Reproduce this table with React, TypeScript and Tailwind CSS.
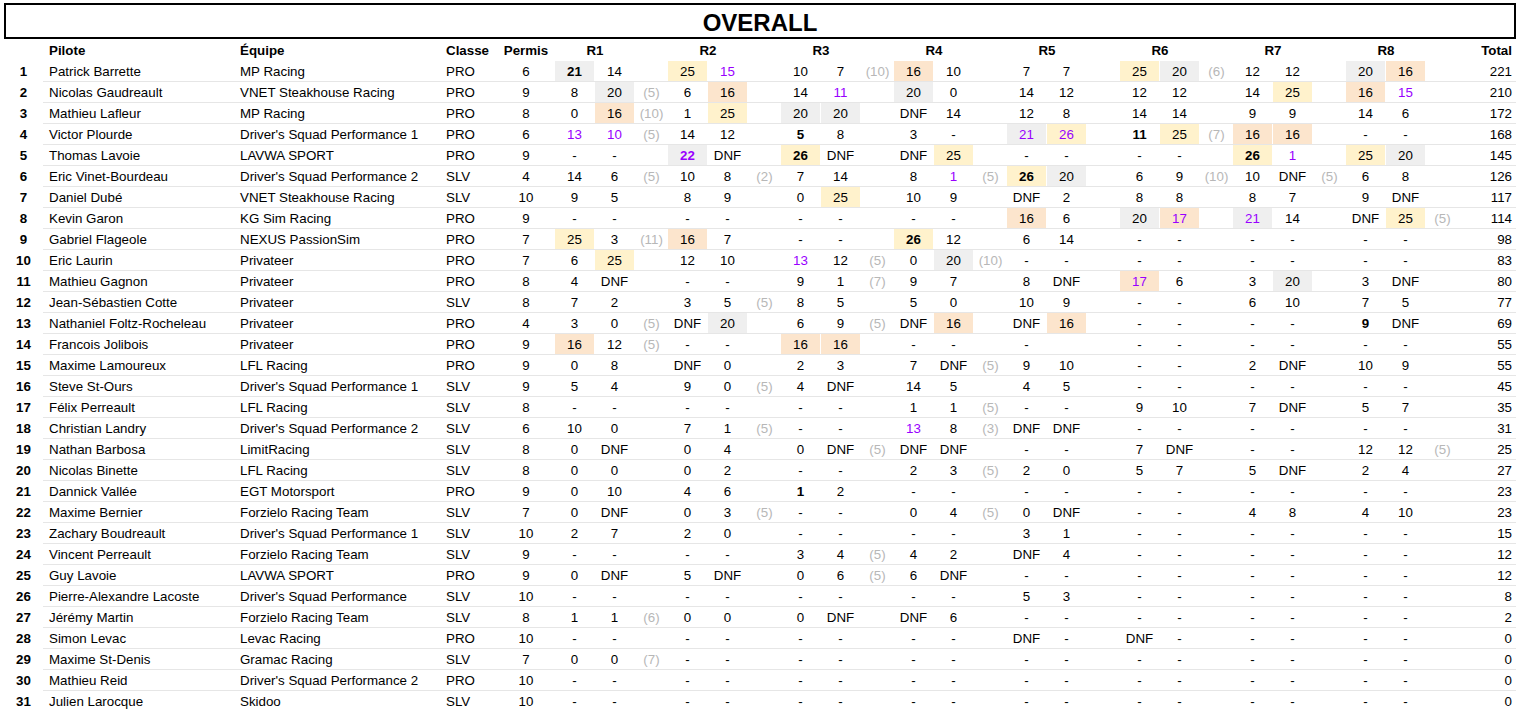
import React from "react";

type Row = [string, string, string, number, string, number];

const ROWS: Row[] = [
  ["Patrick Barrette", "MP Racing", "PRO", 6, "21gb 14 _|25y 15p _|10 7 10|16o 10 _|7 7 _|25y 20g 6|12 12 _|20g 16o _", 221],
  ["Nicolas Gaudreault", "VNET Steakhouse Racing", "PRO", 9, "8 20g 5|6 16o _|14 11p _|20g 0 _|14 12 _|12 12 _|14 25y _|16o 15p _", 210],
  ["Mathieu Lafleur", "MP Racing", "PRO", 8, "0 16o 10|1 25y _|20g 20g _|DNF 14 _|12 8 _|14 14 _|9 9 _|14 6 _", 172],
  ["Victor Plourde", "Driver's Squad Performance 1", "PRO", 6, "13p 10p 5|14 12 _|5b 8 _|3 - _|21gp 26yp _|11b 25y 7|16o 16o _|- - _", 168],
  ["Thomas Lavoie", "LAVWA SPORT", "PRO", 9, "- - _|22gbp DNF _|26yb DNF _|DNF 25y _|- - _|- - _|26yb 1p _|25y 20g _", 145],
  ["Eric Vinet-Bourdeau", "Driver's Squad Performance 2", "SLV", 4, "14 6 5|10 8 2|7 14 _|8 1p 5|26yb 20g _|6 9 10|10 DNF 5|6 8 _", 126],
  ["Daniel Dubé", "VNET Steakhouse Racing", "SLV", 10, "9 5 _|8 9 _|0 25y _|10 9 _|DNF 2 _|8 8 _|8 7 _|9 DNF _", 117],
  ["Kevin Garon", "KG Sim Racing", "PRO", 9, "- - _|- - _|- - _|- - _|16o 6 _|20g 17op _|21gp 14 _|DNF 25y 5", 114],
  ["Gabriel Flageole", "NEXUS PassionSim", "PRO", 7, "25y 3 11|16o 7 _|- - _|26yb 12 _|6 14 _|- - _|- - _|- - _", 98],
  ["Eric Laurin", "Privateer", "PRO", 7, "6 25y _|12 10 _|13p 12 5|0 20g 10|- - _|- - _|- - _|- - _", 83],
  ["Mathieu Gagnon", "Privateer", "PRO", 8, "4 DNF _|- - _|9 1 7|9 7 _|8 DNF _|17op 6 _|3 20g _|3 DNF _", 80],
  ["Jean-Sébastien Cotte", "Privateer", "SLV", 8, "7 2 _|3 5 5|8 5 _|5 0 _|10 9 _|- - _|6 10 _|7 5 _", 77],
  ["Nathaniel Foltz-Rocheleau", "Privateer", "PRO", 4, "3 0 5|DNF 20g _|6 9 5|DNF 16o _|DNF 16o _|- - _|- - _|9b DNF _", 69],
  ["Francois Jolibois", "Privateer", "PRO", 9, "16o 12 5|- - _|16o 16o _|- - _|- _ _|- - _|- - _|- - _", 55],
  ["Maxime Lamoureux", "LFL Racing", "PRO", 9, "0 8 _|DNF 0 _|2 3 _|7 DNF 5|9 10 _|- - _|2 DNF _|10 9 _", 55],
  ["Steve St-Ours", "Driver's Squad Performance 1", "SLV", 9, "5 4 _|9 0 5|4 DNF _|14 5 _|4 5 _|- - _|- - _|- - _", 45],
  ["Félix Perreault", "LFL Racing", "SLV", 8, "- - _|- - _|- - _|1 1 5|- - _|9 10 _|7 DNF _|5 7 _", 35],
  ["Christian Landry", "Driver's Squad Performance 2", "SLV", 6, "10 0 _|7 1 5|- - _|13p 8 3|DNF DNF _|- - _|- - _|- - _", 31],
  ["Nathan Barbosa", "LimitRacing", "SLV", 8, "0 DNF _|0 4 _|0 DNF 5|DNF DNF _|- - _|7 DNF _|- - _|12 12 5", 25],
  ["Nicolas Binette", "LFL Racing", "SLV", 8, "0 0 _|0 2 _|- - _|2 3 5|2 0 _|5 7 _|5 DNF _|2 4 _", 27],
  ["Dannick Vallée", "EGT Motorsport", "PRO", 9, "0 10 _|4 6 _|1b 2 _|- - _|- - _|- - _|- - _|- - _", 23],
  ["Maxime Bernier", "Forzielo Racing Team", "SLV", 7, "0 DNF _|0 3 5|- - _|0 4 5|0 DNF _|- - _|4 8 _|4 10 _", 23],
  ["Zachary Boudreault", "Driver's Squad Performance 1", "SLV", 10, "2 7 _|2 0 _|- - _|- - _|3 1 _|- - _|- - _|- - _", 15],
  ["Vincent Perreault", "Forzielo Racing Team", "SLV", 9, "- - _|- - _|3 4 5|4 2 _|DNF 4 _|- - _|- - _|- - _", 12],
  ["Guy Lavoie", "LAVWA SPORT", "PRO", 9, "0 DNF _|5 DNF _|0 6 5|6 DNF _|- - _|- - _|- - _|- - _", 12],
  ["Pierre-Alexandre Lacoste", "Driver's Squad Performance", "SLV", 10, "- - _|- - _|- - _|- - _|5 3 _|- - _|- - _|- - _", 8],
  ["Jérémy Martin", "Forzielo Racing Team", "SLV", 8, "1 1 6|0 0 _|0 DNF _|DNF 6 _|- - _|- - _|- - _|- - _", 2],
  ["Simon Levac", "Levac Racing", "PRO", 10, "- - _|- - _|- - _|- - _|DNF - _|DNF - _|- - _|- - _", 0],
  ["Maxime St-Denis", "Gramac Racing", "SLV", 7, "0 0 7|- - _|- - _|- - _|- - _|- - _|- - _|- - _", 0],
  ["Mathieu Reid", "Driver's Squad Performance 2", "PRO", 10, "- - _|- - _|- - _|- - _|- - _|- - _|- - _|- - _", 0],
  ["Julien Larocque", "Skidoo", "SLV", 10, "- - _|- - _|- - _|- - _|- - _|- - _|- - _|- - _", 0],
];

function Score({ code }: { code: string }) {
  const m = code.match(/^([0-9]+|DNF|-|_)([gyopb]*)$/);
  const val = m ? m[1] : code;
  const flags = m ? m[2] : "";
  let bg = "bg-white";
  if (flags.includes("g")) bg = "bg-[#efefef]";
  if (flags.includes("y")) bg = "bg-[#fff2cc]";
  if (flags.includes("o")) bg = "bg-[#fce5cd]";
  const color = flags.includes("p") ? "text-[#9900ff]" : "text-black";
  const weight = flags.includes("b") ? "font-bold" : "font-normal";
  return (
    <div className="w-[40px] h-[20px] border-r border-white">
      <div className={`h-full w-full text-center leading-[21px] ${bg} ${color} ${weight}`}>
        {val === "_" ? "" : val}
      </div>
    </div>
  );
}

function Pen({ v }: { v: string }) {
  return (
    <div className="w-[33px] h-[20px] text-center leading-[21px] text-[#b7b7b7]">
      {v === "_" ? "" : `(${v})`}
    </div>
  );
}

export default function App() {
  return (
    <div className="w-[1521px] h-[711px] overflow-hidden bg-white text-black font-['Liberation_Sans',Arial,sans-serif] text-[13.33px]">
      <div className="ml-[4px] mt-[3px] w-[1512px] h-[36px] border-2 border-black flex items-center justify-center">
        <span className="text-[24px] font-bold leading-none pt-[3px]">OVERALL</span>
      </div>
      <div className="ml-[4px] mt-px w-[1512px]">
        <div className="flex h-[21px] font-bold leading-[22px]">
          <div className="w-[39px]" />
          <div className="w-[193px] pl-[6px]">Pilote</div>
          <div className="w-[206px] pl-[4px]">Équipe</div>
          <div className="w-[55px] pl-[4px]">Classe</div>
          <div className="w-[58px] text-center">Permis</div>
          {[1, 2, 3, 4, 5, 6, 7, 8].map((n) => (
            <div key={n} className="flex">
              <div className="w-[80px] text-center">R{n}</div>
              <div className="w-[33px]" />
            </div>
          ))}
          <div className="w-[57px] text-right pr-[4px]">Total</div>
        </div>
        {ROWS.map((r, i) => {
          const rounds = r[4].split("|").map((g) => g.split(" "));
          return (
            <div key={i} className="flex h-[21px]">
              <div className="w-[39px] text-center font-bold leading-[21px]">{i + 1}</div>
              <div className="flex flex-1 border-b border-[#e6e6e6]">
                <div className="w-[193px] pl-[6px] leading-[21px] whitespace-nowrap overflow-hidden">{r[0]}</div>
                <div className="w-[206px] pl-[4px] leading-[21px] whitespace-nowrap overflow-hidden">{r[1]}</div>
                <div className="w-[55px] pl-[4px] leading-[21px]">{r[2]}</div>
                <div className="w-[58px] text-center leading-[21px]">{r[3]}</div>
                {rounds.map((g, j) => (
                  <div key={j} className="flex">
                    <Score code={g[0]} />
                    <Score code={g[1]} />
                    <Pen v={g[2]} />
                  </div>
                ))}
                <div className="w-[57px] text-right pr-[4px] leading-[21px]">{r[5]}</div>
              </div>
            </div>
          );
        })}
      </div>
    </div>
  );
}
